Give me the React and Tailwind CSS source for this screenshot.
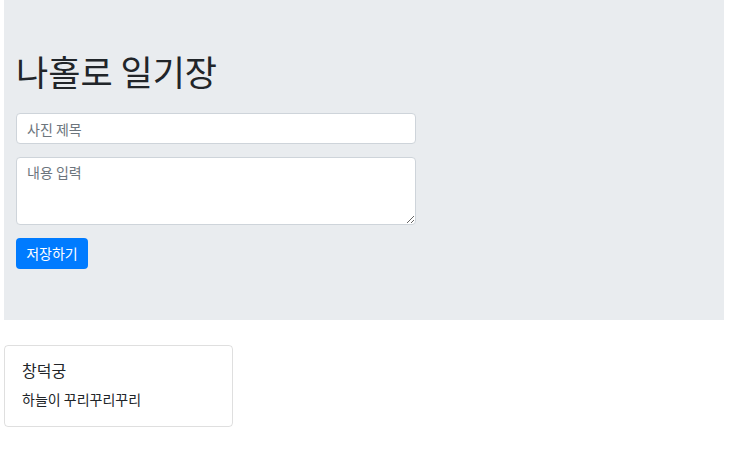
import React from 'react';

export default function App() {
    return (
        <div className="min-h-[453px] bg-white text-[#212529] font-['Noto_Sans_CJK_KR','Noto_Sans',sans-serif]">
            {/* Jumbotron */}
            <div className="mx-1 w-[720px] h-[320px] bg-[#e9ecef] px-3 pt-[50px]">
                <h1 className="text-[35px] leading-[42px] font-normal mb-[21px]">나홀로 일기장</h1>
                <div className="w-[400px] flex flex-col">
                    <input
                        placeholder="사진 제목"
                        className="h-[31px] w-full bg-white border border-[#ced4da] rounded px-[10px] text-[14px] placeholder:text-[#6c757d] outline-none"
                    />
                    <textarea
                        placeholder="내용 입력"
                        className="mt-[13px] h-[68px] w-full bg-white border border-[#ced4da] rounded px-[10px] py-[4px] text-[14px] placeholder:text-[#6c757d] outline-none resize-y"
                    />
                    <div className="mt-[13px]">
                        <button className="h-[31px] w-[72px] bg-[#007bff] text-white text-[14px] rounded">저장하기</button>
                    </div>
                </div>
            </div>

            {/* Card */}
            <div className="mx-1 mt-[25px] w-[229px] h-[82px] border border-black/[0.125] rounded px-[17px] pt-[14px]">
                <h5 className="text-[16px] leading-[1.3] mb-[9px]">창덕궁</h5>
                <p className="text-[14px] leading-[1.4]">하늘이 꾸리꾸리꾸리</p>
            </div>
        </div>
    );
}
